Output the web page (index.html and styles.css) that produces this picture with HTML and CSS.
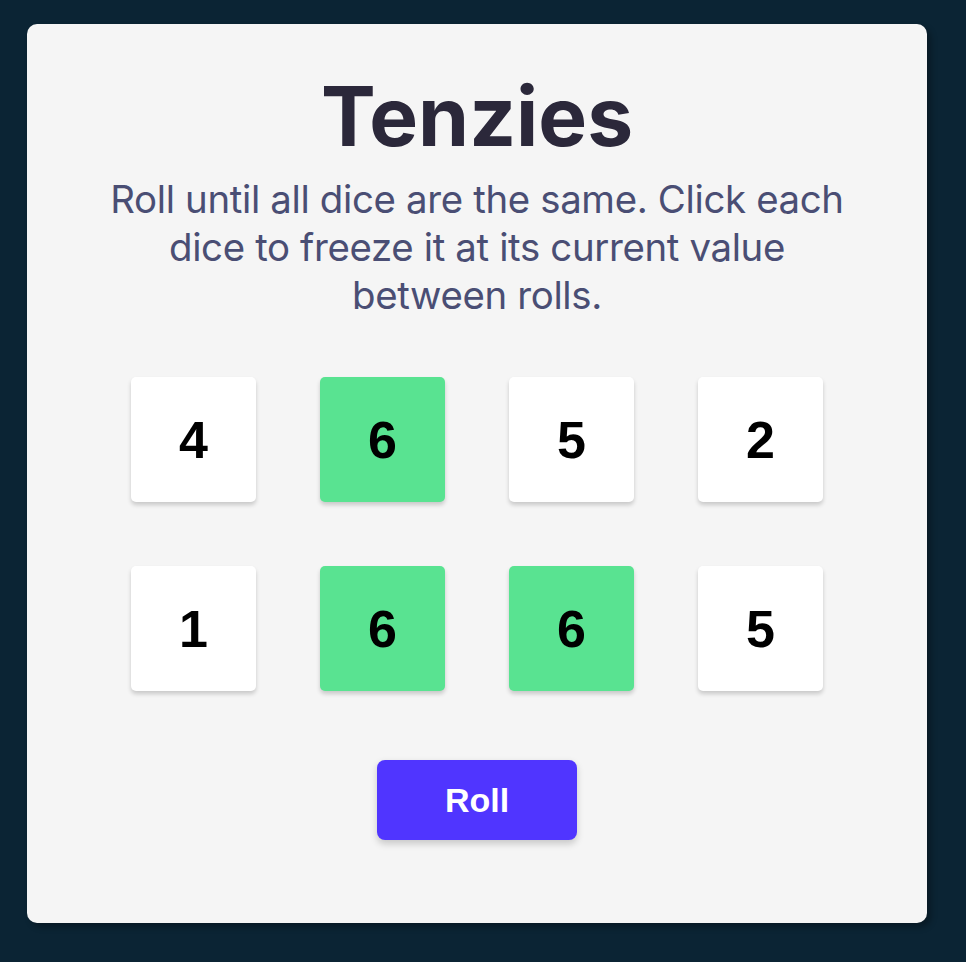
FILE: index.html
```html
<!DOCTYPE html>
<html lang="en">
<head>
<meta charset="utf-8">
<title>Tenzies</title>
<link rel="stylesheet" href="styles.css">
</head>
<body>
<main class="card">
  <h1 class="title">Tenzies</h1>
  <p class="instructions">Roll until all dice are the same. Click each dice to freeze it at its current value between rolls.</p>
  <div class="dice-grid">
    <div class="die">4</div>
    <div class="die held">6</div>
    <div class="die">5</div>
    <div class="die">2</div>
    <div class="die">1</div>
    <div class="die held">6</div>
    <div class="die held">6</div>
    <div class="die">5</div>
  </div>
  <button class="roll-btn">Roll</button>
</main>
</body>
</html>
```
FILE: styles.css
```css
* { box-sizing: border-box; }
html, body { margin: 0; }
body {
  background: #0B2434;
  min-height: 962px;
  padding: 24px 0 0 27px;
  font-family: Inter, "Noto Sans", sans-serif;
}
.card {
  width: 900px;
  height: 899px;
  background: #F5F5F5;
  border-radius: 10px;
  box-shadow: 4px 4px 6px rgba(0, 0, 0, 0.3);
  display: flex;
  flex-direction: column;
  align-items: center;
  padding-top: 53px;
}
.title {
  margin: 0;
  font-size: 82px;
  line-height: 80px;
  font-weight: 700;
  color: #2B283A;
}
.instructions {
  margin: 18px 0 0;
  max-width: 760px;
  text-align: center;
  font-size: 38.4px;
  line-height: 48px;
  letter-spacing: -0.35px;
  font-weight: 400;
  color: #4A4E74;
}
.dice-grid {
  margin-top: 58px;
  display: grid;
  grid-template-columns: repeat(4, 125px);
  grid-auto-rows: 125px;
  gap: 64px;
}
.die {
  background: #FFFFFF;
  border-radius: 5px;
  box-shadow: 0 3px 4px rgba(0, 0, 0, 0.18);
  display: flex;
  align-items: center;
  justify-content: center;
  font-family: "Liberation Sans", Arial, sans-serif;
  font-weight: 700;
  font-size: 52px;
  color: #000;
}
.die.held { background: #59E391; }
.roll-btn {
  margin-top: 69px;
  width: 200px;
  height: 80px;
  border: none;
  border-radius: 8px;
  background: #5035FF;
  color: #FFFFFF;
  font-family: "Liberation Sans", Arial, sans-serif;
  font-weight: 700;
  font-size: 34px;
  box-shadow: 0 3.2px 7.68px rgba(0, 0, 0, 0.18);
  cursor: pointer;
}
```
